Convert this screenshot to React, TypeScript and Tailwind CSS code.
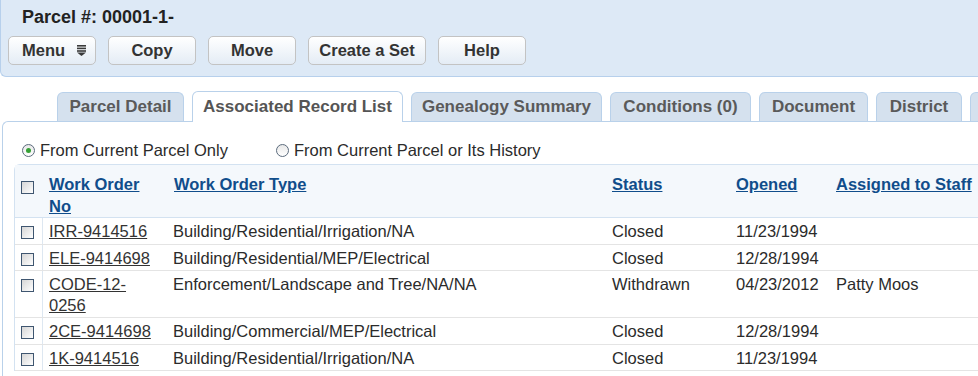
import React from 'react';

const tabs = [
  { label: 'Parcel Detail', w: 'w-[127px]' },
  { label: 'Associated Record List', w: 'w-[211px]', active: true },
  { label: 'Genealogy Summary', w: 'w-[191px]' },
  { label: 'Conditions (0)', w: 'w-[141px]' },
  { label: 'Document', w: 'w-[109px]' },
  { label: 'District', w: 'w-[86px]' },
  { label: '', w: 'w-[60px]' },
];

const rows = [
  { no: 'IRR-9414516', type: 'Building/Residential/Irrigation/NA', status: 'Closed', opened: '11/23/1994', staff: '' },
  { no: 'ELE-9414698', type: 'Building/Residential/MEP/Electrical', status: 'Closed', opened: '12/28/1994', staff: '' },
  { no: 'CODE-12-0256', type: 'Enforcement/Landscape and Tree/NA/NA', status: 'Withdrawn', opened: '04/23/2012', staff: 'Patty Moos' },
  { no: '2CE-9414698', type: 'Building/Commercial/MEP/Electrical', status: 'Closed', opened: '12/28/1994', staff: '' },
  { no: '1K-9414516', type: 'Building/Residential/Irrigation/NA', status: 'Closed', opened: '11/23/1994', staff: '' },
];

function Checkbox() {
  return <span className="block w-[13px] h-[13px] border border-[#3f5670] bg-linear-to-br from-[#d6d6d6] to-white" />;
}

function Radio({ checked }: { checked?: boolean }) {
  return (
    <span className="w-[13px] h-[13px] rounded-full border border-[#5b6b7d] bg-linear-to-b from-[#e8e8e8] to-white flex items-center justify-center shrink-0">
      {checked && <span className="w-[5px] h-[5px] rounded-full bg-[#35a035]" />}
    </span>
  );
}

function Btn({ children, wide }: { children: React.ReactNode; wide?: boolean }) {
  return (
    <button
      className={
        'h-[29px] rounded-[5px] border border-[#c3c3c3] bg-linear-to-b from-white to-[#e4ecf5] font-bold text-[16.5px] text-[#333] flex items-center justify-center ' +
        (wide ? 'w-[118px]' : 'w-[88px]')
      }
    >
      {children}
    </button>
  );
}

const cols = 'grid grid-cols-[27px_125px_438px_124px_100px_220px]';

export default function App() {
  return (
    <div className="h-screen w-screen overflow-hidden bg-white font-['Liberation_Sans',Arial,sans-serif] text-[16.5px] text-[#2b2b2b]">
      {/* Header */}
      <header className="h-[77px] bg-[#dde9f6] border-b border-l border-[#b7d0ec] rounded-bl-[6px]">
        <div className="pl-[21px] pt-[6px] text-[18px] font-bold leading-[22px] text-[#222]">Parcel #: 00001-1-</div>
        <div className="mt-[8px] ml-[7px] flex gap-[12px]">
          <button className="h-[29px] w-[88px] rounded-[5px] border border-[#c3c3c3] bg-linear-to-b from-white to-[#e4ecf5] font-bold text-[16.5px] text-[#333] flex items-center pl-[13px] gap-[12px]">
            Menu
            <svg width="9" height="11" viewBox="0 0 9 11" fill="#3a3a3a">
              <rect x="0" y="0" width="9" height="1.6" />
              <rect x="0" y="2.6" width="9" height="1.6" />
              <rect x="0" y="5.2" width="9" height="1.6" />
              <path d="M0 7.4 L9 7.4 L4.5 11 Z" />
            </svg>
          </button>
          <Btn>Copy</Btn>
          <Btn>Move</Btn>
          <Btn wide>Create a Set</Btn>
          <Btn>Help</Btn>
        </div>
      </header>

      {/* Tabs */}
      <div className="mt-[14px] flex items-end gap-[8px] pl-[57px] relative z-10 whitespace-nowrap">
        {tabs.map((t, i) => (
          <div
            key={i}
            className={
              t.w +
              (t.active
                ? ' h-[31px] -mb-px shrink-0 flex items-center justify-center rounded-t-[6px] border border-b-0 border-[#b9d1ea] bg-white font-bold text-[17px] text-[#555]'
                : ' h-[29px] shrink-0 flex items-center justify-center rounded-t-[6px] border border-b-0 border-[#b9d1ea] bg-[#d5e1ee] font-bold text-[17px] text-[#5a5a5a]')
            }
          >
            {t.label}
          </div>
        ))}
      </div>

      {/* Panel */}
      <div className="ml-[2px] w-[1100px] border-t border-l border-[#b9d1ea] rounded-tl-[6px] pt-[17px] h-[300px]">
        <div className="flex items-center gap-[48px] pl-[19px] leading-[22px]">
          <label className="flex items-center gap-[5px]">
            <Radio checked />
            From Current Parcel Only
          </label>
          <label className="flex items-center gap-[5px]">
            <Radio />
            From Current Parcel or Its History
          </label>
        </div>

        {/* Table */}
        <div className="mt-[3px] ml-[11px] border-t border-l border-[#d3e2f1] rounded-tl-[6px]">
          <div className={cols + ' bg-[#f4f8fc] border-b border-[#d3e2f1] leading-[22px] font-bold text-[#104d8b]'}>
            <div className="pl-[6px] pt-[16px]"><Checkbox /></div>
            <div className="pl-[7px] pr-[8px] pt-[8px]"><span className="underline">Work Order No</span></div>
            <div className="pl-[7px] pt-[8px]"><span className="underline">Work Order Type</span></div>
            <div className="pl-[7px] pt-[8px]"><span className="underline">Status</span></div>
            <div className="pl-[7px] pt-[8px]"><span className="underline">Opened</span></div>
            <div className="pl-[7px] pt-[8px]"><span className="underline">Assigned to Staff</span></div>
          </div>
          {rows.map((r) => (
            <div key={r.no} className={cols + ' border-b border-[#e4e4e4] leading-[20.5px]'}>
              <div className="pl-[6px] pt-[8px]"><Checkbox /></div>
              <div className="pl-[6px] pr-[8px] pt-[3px] pb-[2px] border-l border-[#dde7f1]">
                <span className="underline text-[#333]">
                  {r.no === 'CODE-12-0256' ? <>CODE-12-<wbr />0256</> : r.no}
                </span>
              </div>
              <div className="pl-[6px] pt-[3px]">{r.type}</div>
              <div className="pl-[7px] pt-[3px]">{r.status}</div>
              <div className="pl-[7px] pt-[3px]">{r.opened}</div>
              <div className="pl-[7px] pt-[3px]">{r.staff}</div>
            </div>
          ))}
        </div>
      </div>
    </div>
  );
}
